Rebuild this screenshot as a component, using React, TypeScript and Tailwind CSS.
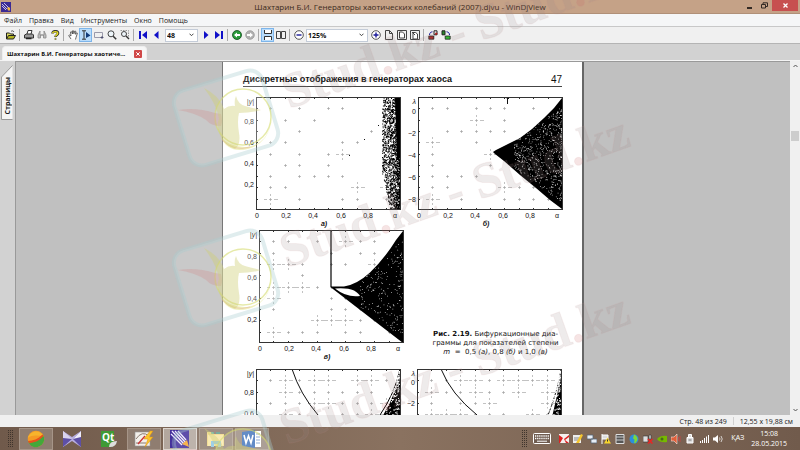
import { ReactNode } from "react";
import clsx from "clsx";

const FONT = "font-['Open_Sans','Noto_Sans',sans-serif]";

// small seeded generator, keeps the plots the same on every render
const random = (seed: number) => {
  let s = seed;
  return () => {
    s = (s * 16807) % 2147483647;
    return s / 2147483647;
  };
};

const speckle = (seed: number, count: number, place: (r: () => number) => [number, number], size = 1) => {
  const r = random(seed);
  let d = "";
  for (let i = 0; i < count; i++) {
    const [x, y] = place(r);
    d += `M${x.toFixed(1)} ${y.toFixed(1)}h${size}v${size}h-${size}z`;
  }
  return d;
};

const W = 144;
const H = 113;

const gridMarks = (seed: number, density: number) => {
  const r = random(seed);
  let d = "";
  for (let i = 1; i < 10; i++) {
    for (let j = 1; j < 10; j++) {
      const x = Math.round(i * 14.4);
      const y = Math.round(j * 11.3);
      const skip = r() > density;
      const long = r() < density - 0.35;
      if (skip) continue;
      d += `M${x - 1} ${y}.5h3M${x}.5 ${y - 1}v3`;
      if (long) d += `M${x - 6} ${y}.5h3M${x + 4} ${y}.5h4M${x}.5 ${y - 5}v2M${x}.5 ${y + 4}v2`;
    }
  }
  return d;
};

type PlotProps = {
  x: number;
  y: number;
  height: number;
  axis: string;
  ticksY: string[];
  firstTick: number;
  stepTick: number;
  label?: string;
  seed: number;
  density: number;
  children: ReactNode;
};

const Plot = ({ x, y, height, axis, ticksY, firstTick, stepTick, label, seed, density, children }: PlotProps) => {
  let ticks = "";
  for (let i = 1; i < 10; i++) {
    ticks += `M${Math.round(i * 14.4)}.5 0v2M${Math.round(i * 14.4)}.5 ${H}v-2M0 ${Math.round(i * 11.3)}.5h2`;
  }
  return (
    <svg
      width="162"
      height={height}
      viewBox={`0 0 162 ${height}`}
      className="shrink-0 font-['Liberation_Sans',Arial,sans-serif] text-[7px]"
      fill="#111"
    >
      <g transform={`translate(${x} ${y})`}>
        <path d={gridMarks(seed, density)} stroke="#999" strokeWidth="0.6" />
        {children}
        <rect x="0.5" y="0.5" width={W} height={H - 1} fill="none" stroke="#333" />
        <path d={ticks} stroke="#333" />
        <text x="-2" y="7" textAnchor="end" fontStyle="italic">{axis}</text>
        {ticksY.map((t, i) => (
          <text key={t} x="-2" y={firstTick + i * stepTick} textAnchor="end">{t}</text>
        ))}
        {label && (
          <>
            {["0", "0,2", "0,4", "0,6", "0,8", "α"].map((t, i) => (
              <text key={t} x={[1, 30, 57, 85, 112, 139][i]} y="121" textAnchor="middle">{t}</text>
            ))}
            <text x="68" y="129" textAnchor="middle" fontStyle="italic" fontWeight="bold">{label}</text>
          </>
        )}
      </g>
    </svg>
  );
};

const edgeCloud = speckle(11, 1900, (r) => {
  const y = r() * 111;
  const start = y < 75 ? 126 : 126 + (y - 75) * 0.22;
  const x = 144 - Math.pow(r(), 1.7) * (144 - start);
  return [x, y + 1];
});

const wedgeHoles = speckle(23, 620, (r) => {
  const x = 144 - Math.pow(r(), 1.7) * 48;
  const t = (x - 75) / 69;
  return [x, 57 - t * 48 + r() * t * 96];
}, 0.7);

const hornHoles = speckle(37, 200, (r) => {
  const x = 143 - Math.pow(r(), 1.5) * 42;
  const t = (x - 72) / 72;
  return [x, 57 - t * t * 50 + r() * (t * t * 50 + t * 50)];
}, 0.7);

const stripes = speckle(51, 130, (r) => {
  const y = r() * 45;
  return [143 - r() * y * 0.35, y + 2];
});

const Btn = ({ title, active, children }: { title: string; active?: boolean; children: ReactNode }) => (
  <button
    title={title}
    aria-label={title}
    className={clsx("flex h-[14px] w-[13px] shrink-0 items-center justify-center", active && "border border-[#7db5ea] bg-[#b9dcfb]")}
  >
    <svg width="10" height="10" viewBox="0 0 10 10" fill="none" stroke="#444" className="shrink-0">{children}</svg>
  </button>
);

const Sep = () => <span className="mx-[2px] h-3 w-px shrink-0 bg-[#aaa]" />;

const Combo = ({ label, value, className }: { label: string; value: string; className: string }) => (
  <span className={clsx("relative flex h-[13px] shrink-0 items-center border border-[#c4ccd8] bg-white", className)}>
    <select aria-label={label} className="w-full appearance-none pl-px text-[7px] leading-none font-bold text-[#111] outline-none">
      <option>{value}</option>
    </select>
    <svg width="5" height="4" viewBox="0 0 5 4" className="pointer-events-none absolute right-[3px]" fill="none" stroke="#444">
      <path d="M.5.7l2 2 2-2" />
    </svg>
  </span>
);

const Toolbar = () => (
  <div className="flex h-[17px] shrink-0 items-center border-t border-[#c8c8c8] bg-[#f0f0f0] pl-1">
    <Btn title="Открыть">
      <path d="M.5 9V3h3l1 1h3v1.500" fill="#d8d860" stroke="#222" />
      <path d="M.5 9l2-3.500h7L7.500 9z" fill="#b4b420" stroke="#222" />
      <path d="M5 1.500c1-1 2-1 3 .5" stroke="#222" strokeWidth=".7" />
    </Btn>
    <Sep />
    <Btn title="Печать">
      <path d="M3 4l1-3.500h4L7 4" fill="#fff" stroke="#333" />
      <path d="M.5 5l2-1h6l1 1v3H.5z" fill="#999" stroke="#333" />
      <path d="M2 8.500h5.500" stroke="#222" strokeWidth="1.500" />
    </Btn>
    <Btn title="Найти">
      <path d="M3 1L1 5v3h2.500V5h3v3H9V5L7 1v4H3z" fill="#bbb" stroke="#888" strokeWidth=".8" />
    </Btn>
    <Btn title="Справка">
      <path d="M2.500 3.500c0-3 5.500-3 5.500 0C8 5 5.500 5 5.500 7" stroke="#333" strokeWidth="2.600" />
      <path d="M2.700 3.300c0-2.300 5-2.300 5 0C7.700 5 5.500 5 5.500 6.500" stroke="#e8e020" strokeWidth="1.400" />
      <circle cx="5.500" cy="9" r=".8" fill="#e8e020" stroke="#333" strokeWidth=".5" />
    </Btn>
    <Sep />
    <Btn title="Рука">
      <path d="M3 9L.7 5.500l1-.5 1.300 1L2.500 2l1-.3L4.500 4V.8h1l.4 3L6.800 1l1 .3-.3 3 1-1.500.9.4L8 7.500 7.500 9.500" fill="#fff" strokeWidth=".8" />
    </Btn>
    <Btn title="Выделение текста" active>
      <path d="M1 .8h4M3 .8v8.400M1 9.200h4" stroke="#333" />
      <path d="M5 2l4.500 3.500L5 8z" fill="#113a78" stroke="none" />
    </Btn>
    <Btn title="Выделение области">
      <path d="M.5 2.500h8v5h-8z" stroke="#9a9aaa" />
      <path d="M8 6v3M6.500 7.500h3" stroke="#446" strokeWidth=".8" />
    </Btn>
    <Btn title="Лупа">
      <circle cx="4" cy="3.800" r="3" fill="#eef6fb" />
      <path d="M6.200 6.200l3 3" stroke="#333" strokeWidth="1.500" />
    </Btn>
    <Btn title="Масштаб области">
      <path d="M.5.500h8v6" stroke="#999" strokeDasharray="1.500 1" />
      <circle cx="4" cy="4" r="2.500" fill="#eef6fb" />
      <path d="M6 6l3 3" stroke="#333" strokeWidth="1.400" />
    </Btn>
    <Sep />
    <Btn title="Первая страница">
      <path d="M1 1h2v8H1zM9 1v8L4 5z" fill="#1010c8" stroke="none" />
    </Btn>
    <Btn title="Предыдущая страница">
      <path d="M7.500 1v8L3 5z" fill="#1010c8" stroke="none" />
    </Btn>
    <Combo label="Страница" value="48" className="mr-px ml-[3px] w-[33px]" />
    <Btn title="Следующая страница">
      <path d="M3 1v8l4.500-4z" fill="#1010c8" stroke="none" />
    </Btn>
    <Btn title="Последняя страница">
      <path d="M9 1H7v8h2zM1 1v8l5-4z" fill="#1010c8" stroke="none" />
    </Btn>
    <Sep />
    <Btn title="Назад">
      <circle cx="5" cy="5" r="4.500" fill="#2a9a3a" stroke="#124a1c" strokeWidth=".8" />
      <path d="M2 5l3-2.500v1.500h3v2H5v1.500z" fill="#fff" stroke="none" />
    </Btn>
    <Btn title="Вперёд">
      <circle cx="5" cy="5" r="4.300" fill="#b0b0b0" stroke="#999" strokeWidth=".8" />
      <path d="M8 5L5 2.500v1.500H2v2h3v1.500z" fill="#fff" stroke="none" />
    </Btn>
    <Sep />
    <Btn title="Непрерывно" active>
      <path d="M1.500 0v3.500h7V0M1.500 10V6.500h7V10" fill="#fff" stroke="#333" />
    </Btn>
    <Btn title="Разворот">
      <path d="M.5 1.500h4v7h-4zM5.500 1.500h4v7h-4z" />
    </Btn>
    <Sep />
    <Btn title="Уменьшить">
      <circle cx="5" cy="5" r="4.300" fill="#fff" strokeWidth=".9" />
      <path d="M2.500 5h5" stroke="#1a1a9a" strokeWidth="1.400" />
    </Btn>
    <Combo label="Масштаб" value="125%" className="mx-px w-[62px]" />
    <Btn title="Увеличить">
      <circle cx="5" cy="5" r="4.300" fill="#fff" strokeWidth=".9" />
      <path d="M2.500 5h5M5 2.500v5" stroke="#1a1a9a" strokeWidth="1.400" />
    </Btn>
    <Btn title="Обычный размер">
      <path d="M1.500.500h4l3 3v6h-7zM5.500.500v3h3" fill="#eee" />
    </Btn>
    <Btn title="По ширине">
      <path d="M.5.500h9v9h-9z" />
      <path d="M2.500 2h3l2 2v4h-5z" fill="#fff" />
    </Btn>
    <Btn title="Вся страница">
      <path d="M.5.500h9v9h-9z" />
      <path d="M3 2.500h2.500L7.500 4v5H3zM2 2l3 3" fill="#fff" />
    </Btn>
    <Sep />
    <Btn title="Повернуть влево">
      <path d="M6 .8h3v4H6z" fill="#eee" stroke="#222" />
      <path d="M7.500 3h1.500v1.500H7.500z" fill="#c33" stroke="#911" strokeWidth=".6" />
      <path d="M.8 6h5v3.200h-5z" fill="#a22" stroke="#222" strokeWidth=".8" />
      <path d="M1.500 5c0-2 1-3 3-3.200" stroke="#1a1a9a" />
    </Btn>
    <Btn title="Повернуть вправо">
      <path d="M1 .8h3v4H1z" fill="#2a8a2a" stroke="#222" />
      <path d="M4.200 6h5v3.200h-5z" fill="#3b3" stroke="#222" strokeWidth=".8" />
      <path d="M8.500 5c0-2-1-3-3-3.200" stroke="#1a1a9a" />
    </Btn>
  </div>
);

const TitleBar = () => (
  <div className="relative flex h-[14px] shrink-0 items-center justify-center border-b border-[#b09078] bg-[#c5a287]">
    <svg width="10" height="10" viewBox="0 0 10 10" className="absolute left-px">
      <rect width="10" height="10" fill="#3c2a94" />
      <path d="M1 2l5 5M3 1l5 5M1 4l4 4" stroke="#e8e4ff" strokeWidth=".8" />
      <path d="M6 5.500h3v3H7z" fill="#f4b83c" />
    </svg>
    <h1 className="text-[8px] leading-none text-[#3a2a20]">Шахтарин Б.И. Генераторы хаотических колебаний (2007).djvu - WinDjView</h1>
    <div className="absolute top-0 right-[2px] flex h-[11px] items-center">
      <button aria-label="Свернуть" className="flex w-[15px] justify-center pt-1"><span className="h-[2px] w-[5px] bg-[#332a24]" /></button>
      <button aria-label="Развернуть" className="flex w-[15px] justify-center">
        <svg width="7" height="7" viewBox="0 0 7 7" fill="none" stroke="#332a24"><path d="M.5 2.500h4v3.500h-4zM2 2V.8h4.500V4.500H5" /></svg>
      </button>
      <button aria-label="Закрыть" className="flex h-[11px] w-[26px] items-center justify-center bg-[#c75050]">
        <svg width="5" height="5" viewBox="0 0 5 5" stroke="#fff" strokeWidth="1.300"><path d="M.5.500l4 4M4.500.500l-4 4" /></svg>
      </button>
    </div>
  </div>
);

const MENU = ["Файл", "Правка", "Вид", "Инструменты", "Окно", "Помощь"];

const Document = () => (
  <article className="mx-auto h-full w-[362px] shrink-0 overflow-hidden border-r-2 border-l border-r-[#666] border-l-[#777] bg-white pr-[20px] pl-[20px] text-[#111]">
    <header className="mt-3 flex h-[13px] items-start justify-between border-b border-[#444] font-['Liberation_Sans',Arial,sans-serif] leading-[11px]">
      <h2 className="text-[9px] font-bold whitespace-nowrap">Дискретные отображения в генераторах хаоса</h2>
      <span className="text-[10px]">47</span>
    </header>
    <div className="mt-[5px] flex">
      <Plot x={13} y={5} height={137} axis="|y|" ticksY={["0,8", "0,6", "0,4", "0,2"]} firstTick={27} stepTick={21} label="а)" seed={5} density={0.45}>
        <path d={edgeCloud} fill="#000" />
        <path d="M139 1h5v60h-3z" fill="#000" />
        <path d="M93 58h1v1h-1zM108 42h1v1h-1zM122 28h1v1h-1z" />
      </Plot>
      <Plot x={13} y={5} height={137} axis="λ" ticksY={["0", "−2", "−4", "−6", "−8"]} firstTick={17} stepTick={22} label="б)" seed={9} density={0.5}>
        <path d="M75 55l3-2 12-6 12-6 12-9 12-11 10-10 8-10v111l-12-9-14-12-16-13-16-14-9-7z" fill="#000" />
        <path d={wedgeHoles} fill="#fff" />
        <path d="M88 0h3v2h-1v5h-1v-5z" />
      </Plot>
    </div>
    <div className="flex">
      <Plot x={16} y={1} height={134} axis="|y|" ticksY={["0,8", "0,6", "0,4", "0,2"]} firstTick={29} stepTick={21} label="в)" seed={14} density={0.65}>
        <path d="M72 0v57" stroke="#000" strokeWidth="1.200" />
        <path d="M72 56.500h13q13-2 26-14Q126 28 137 10l7-9v112L72 57.500z" fill="#000" />
        <path d="M76 58.500q12-1 19 2 5 3 6 5.500-13 2-25-7.500z" fill="#fff" />
        <path d={hornHoles} fill="#fff" />
      </Plot>
      <p className="mt-[101px] flex-1 pl-6 text-center font-['DejaVu_Sans',sans-serif] text-[7px] leading-[9px] whitespace-nowrap">
        <b>Рис. 2.19.</b> Бифуркационные диа-
        <br />
        граммы для показателей степени
        <br />
        <i>m</i> &nbsp;=&nbsp; 0,5 <i>(а)</i>, 0,8 <i>(б)</i> и 1,0 <i>(в)</i>
      </p>
    </div>
    <div className="flex">
      <Plot x={13} y={6} height={56} axis="|y|" ticksY={["0,8", "0,6"]} firstTick={26} stepTick={21} seed={21} density={0.85}>
        <path d="M36 0q8 25 26 46" fill="none" stroke="#111" />
        <path d="M144 0q-5 24-20 46" fill="none" stroke="#000" />
        <path d="M144 2q-4 24-18 46h18z" fill="#000" />
        <path d={stripes} fill="#fff" />
      </Plot>
      <Plot x={12} y={6} height={56} axis="λ" ticksY={["0", "−2"]} firstTick={16} stepTick={21} seed={27} density={0.85}>
        <path d="M24 0q10 25 36 46" fill="none" stroke="#111" />
        <path d="M144 0q-4 24-13 46" fill="none" stroke="#111" strokeDasharray="3 1" />
        <path d="M144 2q-3 24-9 46h9z" fill="#000" />
        <path d={stripes} fill="#fff" />
      </Plot>
    </div>
  </article>
);

const ScrollBar = () => (
  <div className="flex w-[10px] shrink-0 flex-col items-center justify-between bg-[#f0f0f0] py-[3px]">
    <svg width="5" height="4" viewBox="0 0 5 4" fill="none" stroke="#555"><path d="M.5 3l2-2 2 2" /></svg>
    <div className="flex w-full flex-1 flex-col items-center">
      <span className="h-[63px]" />
      <span className="h-[10px] w-2 bg-[#cdcdcd]" />
    </div>
    <svg width="5" height="4" viewBox="0 0 5 4" fill="none" stroke="#555"><path d="M.5 1l2 2 2-2" /></svg>
  </div>
);

const Logo = ({ x, y }: { x: number; y: number }) => (
  <g transform={`translate(${x} ${y})`}>
    <rect x="-46" y="-39" width="92" height="78" rx="13" transform="rotate(-17)" fill="#fff" fillOpacity=".14" stroke="#a9ccd0" strokeOpacity=".36" strokeWidth="4" />
    <circle cx="17" cy="-1" r="28" fill="#fff" fillOpacity=".15" stroke="#d6dc70" strokeOpacity=".6" strokeWidth="1.500" />
    <path d="M-6 18q8 18 28 13 18-5 23-24-6 20-24 22-17 1-27-11z" fill="#dfe27a" fillOpacity=".5" />
    <path d="M-4 22q12 12 28 7" fill="none" stroke="#e09090" strokeOpacity=".35" />
    <path d="M-48-8q18-3 37 3l6 1q2 7 0 12-10 0-15-6-10-7-28-10z" fill="#d08c8c" fillOpacity=".3" />
    <path d="M-22-30q16 8 20 21 5-4 11-3-1-6 1-10 2 8 9 10 8 2 16 4-10 3-22 3-2 8 0 20 2 11-4 16-10-3-15-14-4-10-1-16-2-14-15-31z" fill="#cfcf78" fillOpacity=".42" />
  </g>
);

const Watermark = () => (
  <svg
    width="800"
    height="450"
    viewBox="0 0 800 450"
    className="pointer-events-none absolute top-0 left-0 font-['Liberation_Serif','Times_New_Roman',serif] text-[50px] font-bold"
    aria-hidden="true"
  >
    {[[289, 109], [287, 268], [287, 445]].map(([x, y]) => (
      <text key={y} transform={`translate(${x} ${y}) rotate(-19.5)`} fill="#9a8888" fillOpacity=".17" stroke="#d09090" strokeOpacity=".1" strokeWidth="1">
        Stud<tspan fill="#c86060">.</tspan>kz - Stud<tspan fill="#c86060">.</tspan>kz
      </text>
    ))}
    <Logo x={226} y={118} />
    <Logo x={226} y={278} />
    <Logo x={226} y={458} />
  </svg>
);

const TaskButton = ({ title, state, children }: { title: string; state?: "open" | "active"; children: ReactNode }) => (
  <button
    title={title}
    aria-label={title}
    className={clsx(
      "flex h-[22px] w-[34px] shrink-0 items-center justify-center",
      state === "open" && "border border-[#a69588] bg-[#8f7d70]",
      state === "active" && "border border-[#ddd5ce] bg-[#b3a79e]"
    )}
  >
    <svg width="20" height="18" viewBox="0 0 20 18">{children}</svg>
  </button>
);

const Grip = () => (
  <svg width="6" height="18" viewBox="0 0 6 18" className="shrink-0" stroke="#3f342c" strokeDasharray="1 1"><path d="M.5 0v18M2.500 0v18M4.500 0v18" /></svg>
);

const Tray = ({ children }: { children: ReactNode }) => (
  <svg width="10" height="10" viewBox="0 0 10 10" fill="none" className="shrink-0">{children}</svg>
);

const TaskBar = () => (
  <footer className="flex h-[23px] shrink-0 items-center bg-linear-to-r from-[#705a4b] via-[#8a7260] to-[#715b4c] text-white">
    <div className="flex flex-1 items-center gap-[2px] pl-2">
      <Grip />
      <span className="w-px" />
      <TaskButton title="Браузер" state="open">
        <circle cx="10" cy="9" r="8.300" fill="#f59a23" />
        <path d="M1.700 8C4 1 14-1.500 18 7 12 5 6 5 1.700 8z" fill="#f7b42c" />
        <path d="M2 11c5 1 11-1 15-6 1 1.500 1.500 4 1 6-1 4-5 6.500-9 6.300C5.500 17 3 14 2 11z" fill="#43a83a" />
        <path d="M2 11c5 0 10-2 14.500-6.500l1 1.500C13 11 8 13 3 13z" fill="#e8501e" />
      </TaskButton>
      <TaskButton title="KMPlayer">
        <path d="M1 1l9 6 9-6v16l-9-6-9 6z" fill="#b8aee0" />
        <path d="M1 1l9 8-9 8z" fill="#d9d4ef" />
        <path d="M1 17V8l9 1zM19 1v16l-8-8z" fill="#5d4fa6" />
        <path d="M19 1l-8 8 8-2z" fill="#efedfa" />
      </TaskButton>
      <TaskButton title="Qt Creator">
        <path d="M3 1h13v13l-2 3H3z" fill="#3f9a35" />
        <text x="4" y="11" fontSize="10" fontWeight="bold" fill="#fff">Qt</text>
        <path d="M11 17q0-6 8-6-1 6-7 6z" fill="#ddd" />
      </TaskButton>
      <TaskButton title="Редактор" state="open">
        <path d="M1 2h15v14H1z" fill="#f4f0ea" stroke="#999" strokeWidth=".6" />
        <path d="M2 9q6-9 13-3M2 13h10" stroke="#8a7a70" fill="none" />
        <path d="M4 14l7-8" stroke="#c33" strokeWidth="1.400" />
        <path d="M16 1l-6 8h4l-3 8 8-10h-4l4-6z" fill="#fbc52a" stroke="#d88a10" strokeWidth=".5" />
      </TaskButton>
      <TaskButton title="WinDjView" state="active">
        <path d="M0 0h19v18H0z" fill="#44309c" />
        <path d="M2 1l12 13M5 1l11 12M1 4l11 11M8 1l8 9" stroke="#efeaff" strokeWidth="1.300" />
        <path d="M12 14l5-4 2 7z" fill="#f6a832" />
      </TaskButton>
      <TaskButton title="Проводник" state="open">
        <path d="M1 2h6l1 2h10v12H1z" fill="#f1d987" />
        <path d="M2 5h15v11H2z" fill="#f9e7a5" />
        <path d="M5 3h3M10 3h4" stroke="#5a9" strokeWidth="1.500" />
        <path d="M5 17v-6h10v6h-3v-3H8v3z" fill="#8fc7e6" />
      </TaskButton>
      <TaskButton title="Word" state="open">
        <path d="M7 1h12v16H7z" fill="#fff" />
        <path d="M14 4h4M14 7h4M14 10h4M14 13h4" stroke="#6a8fc8" />
        <path d="M0 2l13-2v18L0 16z" fill="#2a62b4" />
        <path d="M2 5l2 8 2.500-7L9 13l2-8" fill="none" stroke="#fff" strokeWidth="1.600" />
      </TaskButton>
    </div>
    <Grip />
    <svg width="18" height="11" viewBox="0 0 18 11" className="mr-2 ml-[5px] shrink-0">
      <rect x=".5" y=".5" width="17" height="10" rx="1" fill="#6f5c50" stroke="#fff" />
      <path d="M2 3h14M2 5.500h14" stroke="#fff" strokeWidth="1.300" strokeDasharray="1.300 .8" />
      <path d="M4 8.200h10" stroke="#fff" />
    </svg>
    <div className="flex items-center gap-1">
      <Tray><path d="M0 0h10v9H0z" fill="#f5f0ee" /><path d="M0 1l4 3-3 5H0zM5 5l5-4v2L6 6l4 3H7z" fill="#d22" /></Tray>
      <Tray><path d="M0 1h8v8H0z" fill="#eee" /><path d="M1 4h5M1 6h4" stroke="#888" /><path d="M3 9l5-9 2 1-4 8z" fill="#f5c52c" /></Tray>
      <Tray><path d="M0 1h6v4H0zM4 5h6v4H4z" fill="#e8eef6" stroke="#567" strokeWidth=".8" /></Tray>
      <Tray><path d="M1 0v10M1 1h6v4H1" stroke="#fff" fill="#ddd" /><path d="M6.500 3.500L10 9.500H3z" fill="#f9d62c" /><path d="M6.500 5.500v2" stroke="#333" /></Tray>
      <Tray><path d="M1 .5h8v9H1z" fill="#555" stroke="#ddd" /><path d="M1 3h8M1 6h8" stroke="#ccc" /></Tray>
      <Tray><circle cx="5" cy="5" r="4.500" fill="#2b8fdc" /><path d="M5 .5c4 2 5 5 1 9-2-1 1-4-2-5z" fill="#7fd63a" /></Tray>
      <Tray><path d="M0 2h5v6H0zM6 1h2v4H6z" fill="#ddd" stroke="#333" strokeWidth=".6" /><path d="M5 5l4.500 4.500M9.500 5L5 9.500" stroke="#e22" strokeWidth="1.500" /></Tray>
      <Tray><path d="M0 5q4-4 10-3v6Q3 9 0 5z" fill="#76b900" /><circle cx="5" cy="5" r="1.500" fill="#4a6b1c" /></Tray>
      <Tray><path d="M0 3h3l3-3v10L3 7H0z" fill="#e0603a" stroke="#fff" strokeWidth=".5" /><path d="M7.500 3v4M9 2v6" stroke="#c44" strokeWidth=".8" /></Tray>
      <Tray><path d="M3.500 3V.5h3V3M2 3.500h6V9H2z" fill="#ddd" stroke="#fff" /><path d="M3.500 6h3" stroke="#777" /></Tray>
      <Tray><path d="M1.500 9V7M3.500 9V6M5.500 9V4M7.500 9V2.500M9.500 9V1" stroke="#fff" /></Tray>
      <Tray><path d="M0 3.500h2L5 1v8L2 6.500H0z" fill="#fff" /><path d="M6.500 3.500q1 1.500 0 3M8 2q2.500 3 0 6" stroke="#eee" strokeWidth=".8" /></Tray>
    </div>
    <span className="mr-1 ml-2 text-[7px]">ҚАЗ</span>
    <time className="mr-[13px] ml-[3px] flex flex-col items-center text-[7px] leading-[10px]">
      <span>15:08</span>
      <span>28.05.2015</span>
    </time>
  </footer>
);

export default function App() {
  return (
    <div className={clsx("relative flex h-screen flex-col overflow-hidden bg-[#f0f0f0] text-[#1c1c1c]", FONT)}>
      <TitleBar />
      <nav className="flex h-3 shrink-0 items-center gap-[7px] bg-[#f5f6f7] pl-1 text-[7px] leading-none">
        {MENU.map((m) => (
          <button key={m}>{m}</button>
        ))}
      </nav>
      <Toolbar />
      <div className="flex h-[17px] shrink-0 items-end border-t border-[#b4b4b4] bg-[#d2d2d2] pl-[2px]">
        <div className="flex h-[14px] w-[145px] items-center justify-between rounded-t-sm border border-b-0 border-[#eee] bg-[#f7f7f7] pr-1 pl-1 text-[#111]">
          <span className="text-[6px] leading-none font-bold whitespace-nowrap">Шахтарин Б.И. Генераторы хаотиче...</span>
          <button aria-label="Закрыть вкладку" className="flex h-2 w-2 items-center justify-center rounded-[1px] bg-[#d04848]">
            <svg width="4" height="4" viewBox="0 0 4 4" stroke="#fff"><path d="M.3.300l3.400 3.400M3.700.300L.3 3.700" /></svg>
          </button>
        </div>
      </div>
      <main className="flex min-h-0 flex-1 border-t border-[#f4f4f4]">
        <aside className="w-[15px] shrink-0 bg-[#d2d2d2] pt-1">
          <button className="relative ml-px flex h-[55px] w-3 items-end justify-center pb-[6px]">
            <svg width="12" height="55" viewBox="0 0 12 55" className="absolute inset-0" fill="#f5f5f5" stroke="#999">
              <path d="M11.500.500L.5 12v42.500h11" />
            </svg>
            <span className="relative rotate-180 text-[7px] leading-none font-bold [writing-mode:vertical-rl]">Страницы</span>
          </button>
        </aside>
        <section className="flex min-w-0 flex-1 overflow-hidden border-t border-l border-[#999] bg-[#c0c0c0]">
          <Document />
        </section>
        <ScrollBar />
      </main>
      <div className="flex h-3 shrink-0 items-center justify-end bg-[#f0f0f0] pr-[7px] text-[7px] leading-none text-[#222]">
        <span>Стр. 48 из 249</span>
        <span className="mx-[6px] h-2 w-px bg-[#d0d0d0]" />
        <span>12,55 x 19,88 см</span>
      </div>
      <TaskBar />
      <Watermark />
    </div>
  );
}
